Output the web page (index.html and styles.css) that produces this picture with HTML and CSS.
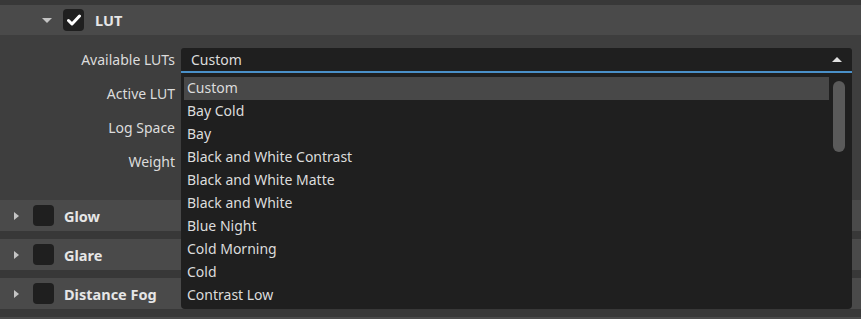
FILE: index.html
```html
<html>

<head>
    <title>Post Processing</title>
    <link rel="stylesheet" href="styles.css">
</head>

<body>
    <div class="panel">
        <div class="section open">
            <div class="header sub">
                <span class="arrow down"></span>
                <span class="check checked">
                    <svg width="14" height="12" viewBox="0 0 14 12">
                        <path d="M1.5 6.5 L5 10 L12.5 2" fill="none" stroke="#fff" stroke-width="3" stroke-linecap="round" stroke-linejoin="round" />
                    </svg>
                </span>
                <span class="title">LUT</span>
            </div>

            <div class="props">
                <div class="prop">
                    <div class="label">Available LUTs</div>
                    <div class="combo">
                        <div class="combo-box">
                            <span>Custom</span>
                            <span class="up"></span>
                        </div>

                        <div class="popup">
                            <div class="list">
                                <div class="item selected">Custom</div>
                                <div class="item">Bay Cold</div>
                                <div class="item">Bay</div>
                                <div class="item">Black and White Contrast</div>
                                <div class="item">Black and White Matte</div>
                                <div class="item">Black and White</div>
                                <div class="item">Blue Night</div>
                                <div class="item">Cold Morning</div>
                                <div class="item">Cold</div>
                                <div class="item">Contrast Low</div>
                            </div>
                            <div class="scroll">
                                <div class="thumb"></div>
                            </div>
                        </div>
                    </div>
                </div>
                <div class="prop">
                    <div class="label">Active LUT</div>
                </div>
                <div class="prop">
                    <div class="label">Log Space</div>
                </div>
                <div class="prop">
                    <div class="label">Weight</div>
                </div>
            </div>
        </div>

        <div class="section">
            <div class="header">
                <span class="arrow right"></span>
                <span class="check"></span>
                <span class="title">Glow</span>
            </div>
        </div>
        <div class="section">
            <div class="header">
                <span class="arrow right"></span>
                <span class="check"></span>
                <span class="title">Glare</span>
            </div>
        </div>
        <div class="section">
            <div class="header">
                <span class="arrow right"></span>
                <span class="check"></span>
                <span class="title">Distance Fog</span>
            </div>
        </div>
        <div class="section">
            <div class="header"></div>
        </div>
    </div>
</body>

</html>
```

FILE: styles.css
```css
body {
    margin: 0;
    background: #383838;
    font-family: "Noto Sans", "Open Sans", sans-serif;
    font-size: 14px;
    color: #dcdcdc;
    overflow: hidden;
}

.panel {
    display: flex;
    flex-direction: column;
    gap: 8px;
    padding-top: 5px;
    height: 319px;
    box-sizing: border-box;
    overflow: hidden;
}

.section {
    flex-shrink: 0;
}

.section.open {
    margin-bottom: -8px;
}

.header {
    display: flex;
    align-items: center;
    height: 31px;
    background: #4a4a4a;
    padding-left: 14px;
}

.header.sub {
    height: 30px;
    padding-left: 42px;
}

.arrow {
    width: 0;
    height: 0;
    border-style: solid;
    border-color: transparent;
}

.arrow.down {
    border-width: 5px 5px 0 5px;
    border-top-color: #c4c4c4;
    margin-right: 11px;
}

.arrow.right {
    border-width: 4px 0 4px 5px;
    border-left-color: #c4c4c4;
    margin-right: 14px;
}

.check {
    width: 21px;
    height: 21px;
    border-radius: 4px;
    background: #1f1f1f;
    display: flex;
    align-items: center;
    justify-content: center;
    margin-right: 10px;
}

.header.sub .check {
    height: 22px;
    margin-right: 11px;
}

.title {
    font-weight: bold;
    font-size: 14.5px;
    color: #e6e6e6;
}

.props {
    background: #3e3e3e;
    height: 165px;
    padding-top: 7px;
    box-sizing: border-box;
}

.prop {
    display: flex;
    align-items: center;
    height: 34px;
}

.label {
    width: 175px;
    text-align: right;
    margin-right: 6px;
    flex-shrink: 0;
}

.combo {
    position: relative;
    flex: 1;
    margin-right: 9px;
    margin-top: 2px;
}

.combo-box {
    display: flex;
    align-items: center;
    justify-content: space-between;
    height: 23px;
    background: #1f1f1f;
    border-bottom: 2px solid #4a90c8;
    border-radius: 3px 3px 0 0;
    padding: 0 10px;
}

.up {
    width: 0;
    height: 0;
    border-style: solid;
    border-color: transparent;
    border-width: 0 5px 5px 5px;
    border-bottom-color: #e0e0e0;
}

.popup {
    position: absolute;
    left: 0;
    right: 0;
    top: 100%;
    height: 236px;
    background: #1f1f1f;
    border-radius: 0 0 4px 4px;
    display: flex;
    padding: 4px 3px 0 3px;
    box-sizing: border-box;
}

.list {
    flex: 1;
}

.item {
    height: 23px;
    line-height: 21px;
    padding-left: 3px;
}

.item.selected {
    background: #484848;
}

.scroll {
    width: 12px;
    margin: 4px 4px 0 4px;
}

.thumb {
    height: 71px;
    background: #5a5a5a;
    border-radius: 6px;
}
```
